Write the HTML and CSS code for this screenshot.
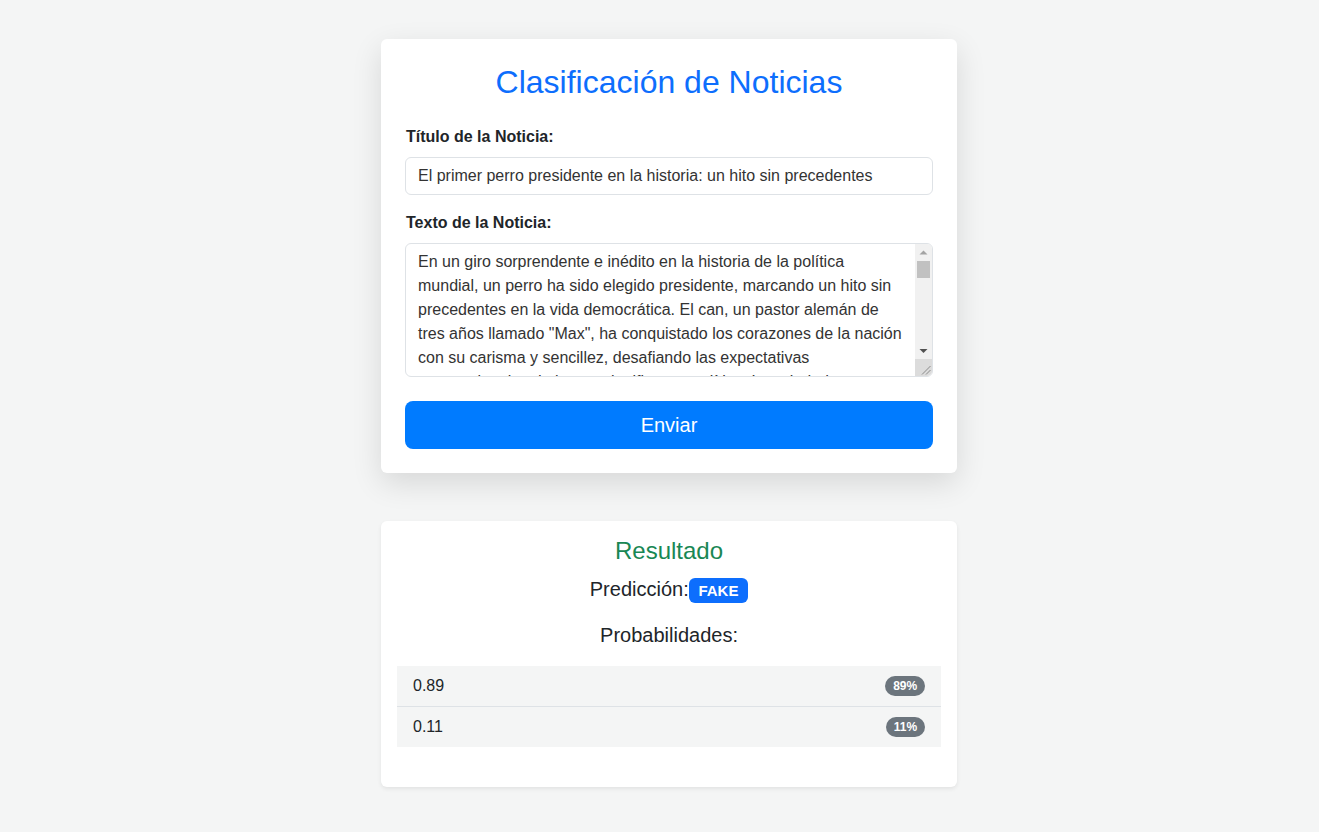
FILE: index.html
```html
<!DOCTYPE html>
<html lang="es">
<head>
<meta charset="utf-8">
<title>Clasificación de Noticias</title>
<link rel="stylesheet" href="styles.css">
</head>
<body>
<main class="page">
  <section class="card card-form">
    <h1 class="title">Clasificación de Noticias</h1>
    <form class="form">
      <div class="field">
        <label class="label" for="titulo">Título de la Noticia:</label>
        <input class="control" id="titulo" type="text" value="El primer perro presidente en la historia: un hito sin precedentes">
      </div>
      <div class="field">
        <label class="label" for="texto">Texto de la Noticia:</label>
        <div class="textarea-wrap">
          <textarea class="control textarea" id="texto" rows="5">En un giro sorprendente e inédito en la historia de la política mundial, un perro ha sido elegido presidente, marcando un hito sin precedentes en la vida democrática. El can, un pastor alemán de tres años llamado "Max", ha conquistado los corazones de la nación con su carisma y sencillez, desafiando las expectativas convencionales de lo que significa ser político. Los ciudadanos, cansados de las promesas incumplidas y de los escándalos de corrupción, decidieron apostar por un líder leal, honesto y siempre dispuesto a escuchar.</textarea>
          <div class="scrollbar" aria-hidden="true">
            <div class="sb-btn">
              <svg width="17" height="17" viewBox="0 0 17 17"><path d="M4.5 10.5 L12.5 10.5 L8.5 6.5 Z" fill="#a3a3a3"/></svg>
            </div>
            <div class="sb-track"><div class="sb-thumb"></div></div>
            <div class="sb-btn">
              <svg width="17" height="17" viewBox="0 0 17 17"><path d="M4.5 7 L12.5 7 L8.5 11 Z" fill="#505050"/></svg>
            </div>
            <div class="sb-corner">
              <svg width="17" height="17" viewBox="0 0 17 17"><path d="M7 15.5 L15.5 7 M11 15.5 L15.5 11" stroke="#8a8a8a" stroke-width="1"/></svg>
            </div>
          </div>
        </div>
      </div>
      <button class="submit" type="button">Enviar</button>
    </form>
  </section>

  <section class="card card-result">
    <h3 class="result-title">Resultado</h3>
    <p class="prediction">Predicción:<span class="badge badge-primary">FAKE</span></p>
    <p class="probs-title">Probabilidades:</p>
    <ul class="list">
      <li class="list-item"><span>0.89</span><span class="badge badge-pill">89%</span></li>
      <li class="list-item"><span>0.11</span><span class="badge badge-pill">11%</span></li>
    </ul>
  </section>
</main>
</body>
</html>
```

FILE: styles.css
```css
* { box-sizing: border-box; }

html, body {
  margin: 0;
  padding: 0;
}

body {
  background: #f4f5f5;
  font-family: "Liberation Sans", Arial, sans-serif;
  font-size: 16px;
  line-height: 1.5;
  color: #212529;
  padding-left: 19px;
}

.page {
  width: 576px;
  margin: 0 auto;
  padding-top: 39px;
  padding-bottom: 45px;
  display: flex;
  flex-direction: column;
  gap: 48px;
}

.card {
  background: #fff;
  border-radius: 6px;
}

.card-form {
  padding: 24px;
  box-shadow: 0 10px 30px rgba(0, 0, 0, 0.12);
}

.title {
  margin: 0 0 24px;
  font-size: 32px;
  font-weight: 400;
  line-height: 1.2;
  color: #0d6efd;
  text-align: center;
}

.form {
  display: flex;
  flex-direction: column;
}

.field {
  display: flex;
  flex-direction: column;
  margin-bottom: 16px;
}

.field + .field { margin-bottom: 24px; }

.label {
  font-weight: 700;
  font-size: 16px;
  line-height: 24px;
  margin: 0 0 8px 1px;
}

.control {
  display: block;
  width: 100%;
  font-family: inherit;
  font-size: 16px;
  line-height: 24px;
  color: #333;
  background: #fff;
  border: 1px solid #dee2e6;
  border-radius: 6px;
  padding: 6px 12px;
  outline: none;
}

.textarea-wrap {
  position: relative;
}

.textarea {
  height: 134px;
  resize: none;
  overflow: hidden;
  padding-right: 29px;
}

.scrollbar {
  position: absolute;
  top: 1px;
  right: 1px;
  bottom: 1px;
  width: 17px;
  display: flex;
  flex-direction: column;
  background: #f1f1f1;
  border-top-right-radius: 5px;
  border-bottom-right-radius: 5px;
  overflow: hidden;
}

.sb-btn,
.sb-corner {
  height: 17px;
  flex: 0 0 17px;
}

.sb-btn svg,
.sb-corner svg {
  display: block;
}

.sb-track {
  flex: 1;
  padding: 0 2px;
}

.sb-thumb {
  height: 17px;
  background: #c1c1c1;
}

.sb-corner {
  background: #dcdcdc;
}

.submit {
  display: block;
  width: 100%;
  height: 48px;
  border: none;
  border-radius: 8px;
  background: #007bff;
  color: #fff;
  font-family: inherit;
  font-size: 20px;
  line-height: 30px;
  cursor: pointer;
}

.card-result {
  padding: 16px;
  box-shadow: 0 2px 4px rgba(0, 0, 0, 0.075);
  text-align: center;
}

.result-title {
  margin: 0 0 8px;
  font-size: 24px;
  font-weight: 400;
  line-height: 1.2;
  color: #198754;
}

.prediction {
  margin: 0 0 16px;
  font-size: 20px;
  line-height: 30px;
}

.probs-title {
  margin: 0 0 16px;
  font-size: 20px;
  line-height: 30px;
}

.badge {
  display: inline-block;
  font-size: 0.75em;
  font-weight: 700;
  line-height: 1;
  color: #fff;
  padding: 0.35em 0.65em;
  border-radius: 6px;
  vertical-align: baseline;
}

.badge-primary {
  background: #0d6efd;
}

.badge-pill {
  background: #6c757d;
  border-radius: 50rem;
}

.list {
  list-style: none;
  margin: 0 0 24px;
  padding: 0;
  text-align: left;
}

.list-item {
  display: flex;
  justify-content: space-between;
  align-items: center;
  background: #f4f5f5;
  padding: 8px 16px;
  line-height: 24px;
}

.list-item + .list-item {
  border-top: 1px solid #dee2e6;
}
```
